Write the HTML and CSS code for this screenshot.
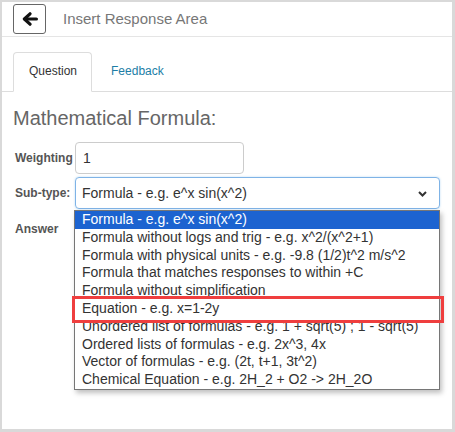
FILE: index.html
```html
<!DOCTYPE html>
<html>
<head>
<meta charset="utf-8">
<link rel="stylesheet" href="styles.css">
</head>
<body>
<div class="frame">
  <div class="header">
    <button class="back" type="button" aria-label="Back">
      <svg width="16" height="14" viewBox="0 0 16 14"><path d="M14.4 7H3" fill="none" stroke="#111" stroke-width="3.2" stroke-linecap="round"/><path d="M8 1.8L2.4 7L8 12.2" fill="none" stroke="#111" stroke-width="3.2" stroke-linecap="round" stroke-linejoin="round"/></svg>
    </button>
    <div class="title">Insert Response Area</div>
  </div>
  <div class="tabs">
    <div class="tab active">Question</div>
    <div class="tab link">Feedback</div>
  </div>
  <div class="content">
    <h1 class="heading">Mathematical Formula:</h1>
    <div class="row">
      <div class="label">Weighting</div>
      <div class="input">1</div>
    </div>
    <div class="row">
      <div class="label">Sub-type:</div>
      <div class="select-wrap">
        <div class="select">
          <span>Formula - e.g. e^x sin(x^2)</span>
          <svg class="chev" width="9" height="6" viewBox="0 0 9 6"><path d="M1 1L4.5 4.5L8 1" fill="none" stroke="#333" stroke-width="2"/></svg>
        </div>
        <div class="dropdown">
          <div class="opt selected">Formula - e.g. e^x sin(x^2)</div>
          <div class="opt">Formula without logs and trig - e.g. x^2/(x^2+1)</div>
          <div class="opt">Formula with physical units - e.g. -9.8 (1/2)t^2 m/s^2</div>
          <div class="opt">Formula that matches responses to within +C</div>
          <div class="opt">Formula without simplification</div>
          <div class="opt">Equation - e.g. x=1-2y</div>
          <div class="opt">Unordered list of formulas - e.g. 1 + sqrt(5) ; 1 - sqrt(5)</div>
          <div class="opt">Ordered lists of formulas - e.g. 2x^3, 4x</div>
          <div class="opt">Vector of formulas - e.g. (2t, t+1, 3t^2)</div>
          <div class="opt">Chemical Equation - e.g. 2H_2 + O2 -&gt; 2H_2O</div>
          <div class="mark"></div>
        </div>
      </div>
    </div>
    <div class="row answer">
      <div class="label">Answer</div>
    </div>
  </div>
</div>
</body>
</html>
```

FILE: styles.css
```css
* { box-sizing: border-box; }
html, body { margin: 0; padding: 0; background: #fff; }
body { font-family: "Liberation Sans", Arial, sans-serif; color: #333; }
.frame {
  width: 455px; height: 432px;
  border: 2px solid #d9d9d9;
  border-right-width: 3px; border-bottom-width: 3px;
  background: #fff;
  overflow: hidden;
}
.header {
  height: 35px;
  border-bottom: 1px solid #e5e5e5;
  display: flex; align-items: flex-start;
}
.back {
  margin: 2px 0 0 11px;
  width: 33px; height: 30px;
  border: 1px solid #666; border-radius: 3px;
  background: #fff; padding: 0;
  display: flex; align-items: center; justify-content: center;
}
.title {
  margin-left: 17px;
  font-size: 15px; line-height: 34px; color: #777;
}
.tabs {
  display: flex;
  padding: 15px 0 0 11px;
  border-bottom: 1px solid #ddd;
}
.tab {
  font-size: 12px; line-height: 17px;
  padding: 10px 14px 11px 15px;
  border: 1px solid transparent;
  border-radius: 4px 4px 0 0;
  margin-bottom: -1px;
}
.tab.active { border-color: #ddd; border-bottom-color: #fff; background: #fff; color: #333; }
.tab.link { color: #1d7ea6; margin-left: 3px; }
.content { padding: 0 0 0 11px; }
.heading {
  margin: 14px 0 12px 0;
  font-size: 20px; line-height: 24px; font-weight: normal; color: #666;
}
.row { display: flex; align-items: center; margin-bottom: 3px; }
.label {
  width: 62px; padding-left: 2px;
  font-size: 12px; font-weight: bold; color: #555; line-height: 17px;
}
.input {
  width: 169px; height: 32px;
  border: 1px solid #ccc; border-radius: 4px;
  padding-left: 7px;
  font-size: 14px; line-height: 30px; color: #333;
}
.select-wrap { position: relative; }
.select {
  width: 365px; height: 32px;
  border: 1px solid #7fb3e6; border-radius: 4px;
  box-shadow: 0 0 2px rgba(102,175,233,.5);
  padding-left: 6px; padding-right: 12px;
  display: flex; align-items: center; justify-content: space-between;
  font-size: 14px; color: #333;
}
.chev { margin-top: 1px; }
.dropdown {
  position: absolute; left: -1px; top: 33px;
  width: 366px;
  border: 1px solid #767676;
  background: #fff;
  box-shadow: 2px 3px 5px rgba(0,0,0,.25);
  z-index: 5;
}
.opt {
  font-size: 14px; line-height: 17.8px; height: 17.8px;
  padding-left: 7px; color: #333; white-space: nowrap;
}
.opt.selected { background: #1c63d0; color: #fff; }
.mark {
  position: absolute; left: -3px; top: 85px;
  width: 372px; height: 27px;
  border: 3px solid #ef3e3e;
}
.answer { margin-top: 0; }
.answer .label { padding-top: 9px; }
```
